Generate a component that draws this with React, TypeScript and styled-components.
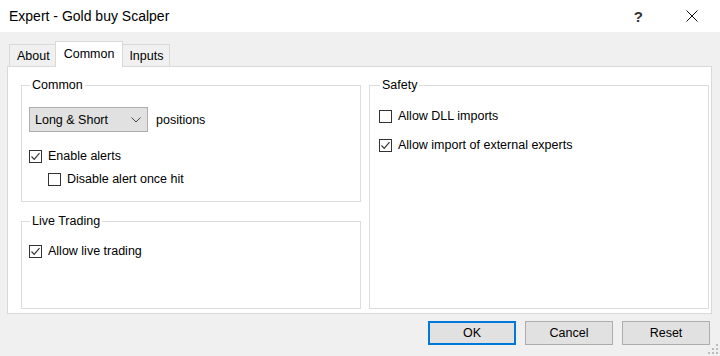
import React from "react";
import styled, { createGlobalStyle } from "styled-components";

const GlobalStyle = createGlobalStyle`
  html, body { margin: 0; padding: 0; background: #f0f0f0; }
  body { font-family: "Liberation Sans", Arial, sans-serif; font-size: 12px; color: #000; }
  * { box-sizing: border-box; }
`;

const Window = styled.div`
  width: 720px;
  height: 356px;
  display: flex;
  flex-direction: column;
  background: #f0f0f0;
  overflow: hidden;
`;

const TitleBar = styled.div`
  height: 32px;
  flex: none;
  background: #fff;
  display: flex;
  align-items: center;
  padding-left: 9px;
`;

const Title = styled.div`
  flex: 1;
  font-size: 14px;
  color: #000;
  padding-bottom: 1px;
`;

const Controls = styled.div`
  display: flex;
  align-items: center;
  gap: 43px;
  padding-right: 22px;
`;

const HelpGlyph = styled.span`
  font-size: 15px;
  font-weight: bold;
  color: #333;
  line-height: 1;
`;

const Body = styled.div`
  flex: 1;
  display: flex;
  flex-direction: column;
  padding: 9px 8px 0 7px;
`;

const TabStrip = styled.div`
  height: 25px;
  display: flex;
  align-items: flex-end;
  padding-left: 2px;
  position: relative;
  z-index: 1;
`;

const Tab = styled.div<{ $active?: boolean }>`
  height: ${(p) => (p.$active ? "26px" : "22px")};
  margin: ${(p) => (p.$active ? "0 -2px -1px" : "0")};
  padding: ${(p) => (p.$active ? "6px 8px 0" : "2px 6px 0 7px")};
  background: ${(p) => (p.$active ? "#fff" : "#f0f0f0")};
  border: 1px solid #d9d9d9;
  border-bottom: none;
  display: flex;
  align-items: ${(p) => (p.$active ? "flex-start" : "center")};
  font-size: 12.5px;
  z-index: ${(p) => (p.$active ? 2 : 0)};
  line-height: 1;
`;

const Panel = styled.div`
  height: 248px;
  background: #fff;
  border: 1px solid #d9d9d9;
  padding: 11px 2px 4px 13px;
  display: grid;
  grid-template-columns: 340px 340px;
  column-gap: 8px;
`;

const Column = styled.div`
  display: flex;
  flex-direction: column;
  gap: 12px;
`;

const Group = styled.fieldset<{ $fill?: boolean; $padLeft?: number; $padTop?: number; $padBottom?: number }>`
  margin: 0;
  min-width: 0;
  border: 1px solid #dcdcdc;
  padding: ${(p) => p.$padTop ?? 14}px 8px ${(p) => p.$padBottom ?? 12}px ${(p) => p.$padLeft ?? 7}px;
  flex: ${(p) => (p.$fill ? 1 : "none")};
  display: flex;
  flex-direction: column;
`;

const Legend = styled.legend`
  padding: 0 2px;
  margin-left: 1px;
  font-size: 12.5px;
  line-height: 14px;
`;

const Row = styled.div<{ $mt?: number; $indent?: number }>`
  display: flex;
  align-items: center;
  height: 18px;
  margin-top: ${(p) => p.$mt ?? 0}px;
  padding-left: ${(p) => p.$indent ?? 0}px;
`;

const SelectRow = styled.div`
  display: flex;
  align-items: center;
  gap: 8px;
`;

const Select = styled.div`
  width: 119px;
  height: 25px;
  background: #e1e1e1;
  border: 1px solid #adadad;
  display: flex;
  align-items: center;
  justify-content: space-between;
  padding: 0 6px 0 5px;
  font-size: 12.5px;
`;

const Label = styled.span`
  font-size: 12.5px;
  white-space: nowrap;
`;

const Box = styled.span`
  width: 13px;
  height: 13px;
  flex: none;
  border: 1px solid #333;
  background: #fff;
  margin-right: 6px;
  display: flex;
  align-items: center;
  justify-content: center;
`;

const Footer = styled.div`
  flex: 1;
  display: flex;
  justify-content: flex-end;
  align-items: flex-start;
  gap: 9px;
  padding: 7px 2px 0 0;
  position: relative;
`;

const Button = styled.div<{ $primary?: boolean }>`
  width: 88px;
  height: 24px;
  background: #e1e1e1;
  border: ${(p) => (p.$primary ? "2px solid #0078d7" : "1px solid #adadad")};
  display: flex;
  align-items: center;
  justify-content: center;
  font-size: 12.5px;
`;

const Grip = styled.svg`
  position: absolute;
  right: -6px;
  bottom: 2px;
`;

const Check = ({ checked }: { checked?: boolean }) => (
  <Box>
    {checked && (
      <svg width="11" height="11" viewBox="0 0 11 11">
        <path d="M1.5 5.5 L4.2 8.3 L9.5 2.2" fill="none" stroke="#333" strokeWidth="1.2" />
      </svg>
    )}
  </Box>
);

const CheckItem = ({ label, checked, mt, indent }: { label: string; checked?: boolean; mt?: number; indent?: number }) => (
  <Row $mt={mt} $indent={indent}>
    <Check checked={checked} />
    <Label>{label}</Label>
  </Row>
);

export default function App() {
  return (
    <Window>
      <GlobalStyle />
      <TitleBar>
        <Title>Expert - Gold buy Scalper</Title>
        <Controls>
          <HelpGlyph>?</HelpGlyph>
          <svg width="12" height="12" viewBox="0 0 12 12">
            <path d="M0.5 0.5 L11.5 11.5 M11.5 0.5 L0.5 11.5" stroke="#111" strokeWidth="1" fill="none" />
          </svg>
        </Controls>
      </TitleBar>
      <Body>
        <TabStrip>
          <Tab>About</Tab>
          <Tab $active>Common</Tab>
          <Tab>Inputs</Tab>
        </TabStrip>
        <Panel>
          <Column>
            <Group $padTop={15} $padBottom={13}>
              <Legend>Common</Legend>
              <SelectRow>
                <Select>
                  <span>Long &amp; Short</span>
                  <svg width="10" height="6" viewBox="0 0 10 6">
                    <path d="M0.5 0.5 L5 5 L9.5 0.5" fill="none" stroke="#444" strokeWidth="1" />
                  </svg>
                </Select>
                <Label>positions</Label>
              </SelectRow>
              <CheckItem label="Enable alerts" checked mt={15} />
              <CheckItem label="Disable alert once hit" mt={5} indent={19} />
            </Group>
            <Group $fill $padTop={14}>
              <Legend>Live Trading</Legend>
              <CheckItem label="Allow live trading" checked />
            </Group>
          </Column>
          <Column>
            <Group $fill $padTop={15} $padLeft={9}>
              <Legend>Safety</Legend>
              <CheckItem label="Allow DLL imports" />
              <CheckItem label="Allow import of external experts" checked mt={11} />
            </Group>
          </Column>
        </Panel>
        <Footer>
          <Button $primary>OK</Button>
          <Button>Cancel</Button>
          <Button>Reset</Button>
          <Grip width="10" height="10" viewBox="0 0 10 10">
            <rect x="8" y="0" width="2" height="2" fill="#bcbcbc" />
            <rect x="4" y="4" width="2" height="2" fill="#bcbcbc" />
            <rect x="8" y="4" width="2" height="2" fill="#bcbcbc" />
            <rect x="0" y="8" width="2" height="2" fill="#bcbcbc" />
            <rect x="4" y="8" width="2" height="2" fill="#bcbcbc" />
            <rect x="8" y="8" width="2" height="2" fill="#bcbcbc" />
          </Grip>
        </Footer>
      </Body>
    </Window>
  );
}
